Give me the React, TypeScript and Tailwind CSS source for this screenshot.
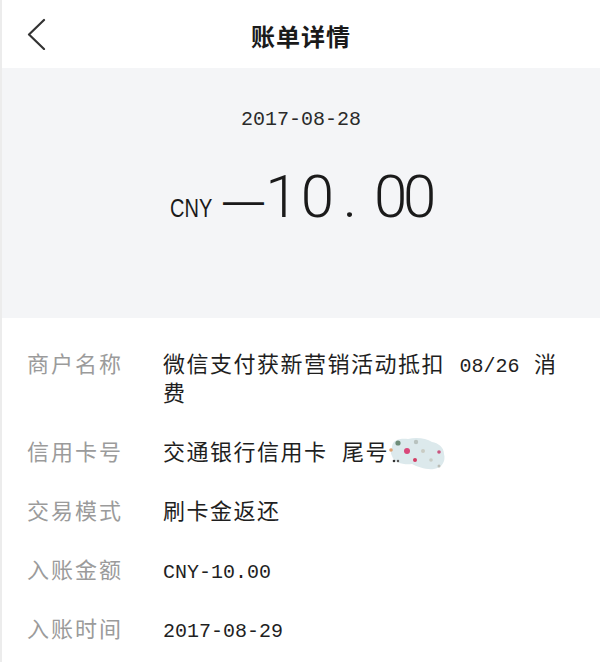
import React from "react";

const cjk = "font-['Noto_Sans_CJK_SC',sans-serif]";

function Blob() {
  return (
    <svg width="60" height="34" viewBox="0 0 60 34" className="inline-block align-middle -ml-[1px] -my-[6px]">
      <path
        d="M4 10 C4 3 12 1 20 2 C28 0 38 1 44 5 C50 6 56 10 56 17 C58 24 54 31 46 32 C38 33 30 30 24 27 C16 28 6 26 4 19 C2 16 3 13 4 10 Z"
        fill="#dce9ec"
      />
      <circle cx="10" cy="6" r="2.6" fill="#6e8c78" />
      <circle cx="28" cy="5" r="2.2" fill="#b8c2bf" />
      <circle cx="19" cy="14" r="3" fill="#d9487a" />
      <circle cx="35" cy="14" r="2" fill="#c9ccc4" />
      <circle cx="51" cy="15" r="1.8" fill="#c9557e" />
      <circle cx="6" cy="24" r="1.3" fill="#333" />
      <circle cx="10" cy="24" r="1.2" fill="#555" />
      <circle cx="27" cy="23" r="2" fill="#d23c64" />
      <circle cx="43" cy="23" r="1.8" fill="#c8ccc5" />
      <circle cx="51" cy="29" r="1.5" fill="#b9bcb6" />
      <circle cx="3" cy="13" r="1.8" fill="#e0a070" />
    </svg>
  );
}

function Row({ label, children }: { label: string; children: React.ReactNode }) {
  return (
    <div className="grid grid-cols-[136px_405px] py-[15px]">
      <div className={`${cjk} text-[22px] leading-[29px] tracking-[2px] text-[#9b9b9b]`}>{label}</div>
      <div className={`${cjk} text-[22px] leading-[29px] tracking-[1.5px] text-[#1f1f1f]`}>{children}</div>
    </div>
  );
}

const mono = "font-['Liberation_Mono',monospace] text-[20px] leading-none tracking-normal";
const big = "text-center font-['Roboto',sans-serif] font-light text-[60px] leading-none";

export default function App() {
  return (
    <div className="w-[600px] h-[662px] bg-white border-l-[2px] border-[#ececec] overflow-hidden">
      <div className="h-[68px] grid grid-cols-[1fr_auto_1fr] items-center">
        <div className="pl-[24px]">
          <svg width="20" height="32" viewBox="0 0 20 32" className="block">
            <polyline points="18,2 3,16.5 18,31" fill="none" stroke="#333" strokeWidth="2.2" strokeLinecap="round" strokeLinejoin="round" />
          </svg>
        </div>
        <div className={`${cjk} text-[24px] font-bold tracking-[1px] text-[#1a1a1a] pt-[4px]`}>账单详情</div>
        <div />
      </div>
      <div className="h-[250px] bg-[#f4f5f7] flex flex-col items-center pt-[40px]">
        <div className="font-['Liberation_Mono',monospace] text-[20px] leading-[24px] text-[#2a2a2a]">2017-08-28</div>
        <div className="mt-[35px] flex items-baseline text-[#1a1a1a]">
          <span className="w-[42px] inline-block font-['Liberation_Sans',sans-serif] text-[26px] leading-none">
            <span className="inline-block origin-left scale-x-[0.77]">CNY</span>
          </span>
          <span className="ml-[11px] w-[41px] inline-block -translate-y-[3px] font-['Liberation_Sans',sans-serif] text-[41px] leading-none">
            —
          </span>
          <span className={`w-[36px] ${big}`}>1</span>
          <span className={`w-[35px] ${big}`}>0</span>
          <span className={`w-[30px] ${big}`}>.</span>
          <span className={`ml-[9px] w-[29px] ${big}`}>0</span>
          <span className={`w-[29px] ${big}`}>0</span>
        </div>
      </div>
      <div className="pl-[25px] pt-[15px]">
        <Row label="商户名称">
          微信支付获新营销活动抵扣 <span className={`${mono} mx-[8px]`}>08/26</span> 消费
        </Row>
        <Row label="信用卡号">
          交通银行信用卡 <span className="ml-[8px]">尾号</span>
          <Blob />
        </Row>
        <Row label="交易模式">刷卡金返还</Row>
        <Row label="入账金额">
          <span className={mono}>CNY-10.00</span>
        </Row>
        <Row label="入账时间">
          <span className={mono}>2017-08-29</span>
        </Row>
      </div>
    </div>
  );
}
